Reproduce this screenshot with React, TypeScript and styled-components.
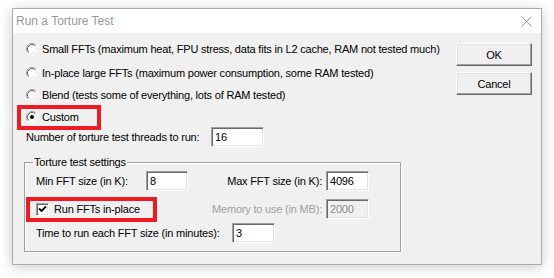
import React from "react";
import styled, { createGlobalStyle } from "styled-components";

const Global = createGlobalStyle`
  html, body { margin: 0; padding: 0; background: #ffffff; }
  body { font-family: "Liberation Sans", Arial, sans-serif; }
`;

const Page = styled.div`
  width: 554px;
  height: 278px;
  padding: 8px 0 0 12px;
  box-sizing: border-box;
`;

const Window = styled.div`
  width: 530px;
  height: 257px;
  box-sizing: border-box;
  border: 1px solid #aaaaaa;
  background: #f0f0f0;
  box-shadow: 0 2px 12px rgba(0, 0, 0, 0.22);
  display: flex;
  flex-direction: column;
`;

const TitleBar = styled.div`
  height: 24px;
  background: #ffffff;
  display: flex;
  align-items: center;
  justify-content: space-between;
  padding: 0 9px 0 3px;
`;

const Title = styled.span`
  font-size: 12px;
  color: #999999;
`;

const Client = styled.div`
  flex: 1;
  display: flex;
  font-size: 11px;
  letter-spacing: -0.2px;
  color: #000;
`;

const LeftCol = styled.div`
  flex: 1;
  display: flex;
  flex-direction: column;
  padding: 6px 0 0 13px;
`;

const RightCol = styled.div`
  width: 76px;
  margin-right: 9px;
  padding-top: 10px;
  display: flex;
  flex-direction: column;
  gap: 6px;
`;

const Button = styled.div`
  height: 23px;
  box-sizing: border-box;
  border: 1px solid;
  border-color: #ffffff #696969 #696969 #ffffff;
  box-shadow: inset -1px -1px 0 #a0a0a0, inset 1px 1px 0 #e3e3e3;
  background: #f0f0f0;
  display: flex;
  align-items: center;
  justify-content: center;
  font-size: 11px;
`;

const Row = styled.div<{ $mt?: number }>`
  position: relative;
  height: 20px;
  display: flex;
  align-items: center;
  margin-top: ${(p) => p.$mt ?? 0}px;
  white-space: nowrap;
`;

const RadioLabel = styled.span`
  margin-left: 4px;
`;

const Label = styled.span<{ $w?: number; $disabled?: boolean; $right?: boolean }>`
  display: inline-block;
  width: ${(p) => (p.$w ? `${p.$w}px` : "auto")};
  color: ${(p) => (p.$disabled ? "#a0a0a0" : "#000")};
  text-align: ${(p) => (p.$right ? "right" : "left")};
  padding-right: ${(p) => (p.$right ? "4px" : "0")};
  box-sizing: border-box;
  white-space: nowrap;
`;

const Input = styled.div<{ $w: number; $disabled?: boolean }>`
  width: ${(p) => p.$w}px;
  height: 20px;
  box-sizing: border-box;
  border: 1px solid;
  border-color: #a0a0a0 #ffffff #ffffff #a0a0a0;
  box-shadow: inset 1px 1px 0 #696969, inset -1px -1px 0 #e3e3e3;
  background: ${(p) => (p.$disabled ? "#f0f0f0" : "#ffffff")};
  color: ${(p) => (p.$disabled ? "#8a8a8a" : "#000")};
  padding: 0 0 0 3px;
  display: flex;
  align-items: center;
  font-size: 11px;
`;

const Highlight = styled.div<{ $l: number; $t: number; $w: number; $h: number }>`
  position: absolute;
  left: ${(p) => p.$l}px;
  top: ${(p) => p.$t}px;
  width: ${(p) => p.$w}px;
  height: ${(p) => p.$h}px;
  box-sizing: border-box;
  border: 4px solid #ed1c24;
  pointer-events: none;
`;

const Group = styled.fieldset`
  margin: 9px 0 0 -2px;
  width: 377px;
  box-sizing: border-box;
  border: 1px solid #a0a0a0;
  box-shadow: 1px 1px 0 #ffffff, inset 1px 1px 0 #ffffff;
  padding: 2px 31px 8px 11px;
  min-inline-size: 0;
`;

const Legend = styled.legend`
  margin-left: -3px;
  padding: 0 1px;
  background: #f0f0f0;
  font-size: 11px;
  line-height: 13px;
`;

const GridRow = styled.div<{ $mt?: number }>`
  position: relative;
  display: grid;
  grid-template-columns: 110px 42px 1fr 43px;
  align-items: center;
  height: 20px;
  margin-top: ${(p) => p.$mt ?? 0}px;
`;

const CheckWrap = styled.div`
  grid-column: 1 / span 2;
  display: flex;
  align-items: center;
  white-space: nowrap;
`;

const CheckBox = styled.span`
  width: 13px;
  height: 13px;
  box-sizing: border-box;
  border: 1px solid;
  border-color: #a0a0a0 #ffffff #ffffff #a0a0a0;
  box-shadow: inset 1px 1px 0 #696969, inset -1px -1px 0 #e3e3e3;
  background: #ffffff;
  display: flex;
  align-items: center;
  justify-content: center;
  margin-right: 5px;
`;

const Radio = ({ checked }: { checked?: boolean }) => (
  <svg width="12" height="12" viewBox="0 0 12 12">
    <circle cx="6" cy="6" r="5.5" fill="#ffffff" />
    <path d="M2.11 9.89 A5.5 5.5 0 0 1 9.89 2.11" stroke="#a0a0a0" fill="none" />
    <path d="M9.89 2.11 A5.5 5.5 0 0 1 2.11 9.89" stroke="#ffffff" fill="none" />
    <path d="M2.82 9.18 A4.5 4.5 0 0 1 9.18 2.82" stroke="#696969" fill="none" />
    <path d="M9.18 2.82 A4.5 4.5 0 0 1 2.82 9.18" stroke="#e3e3e3" fill="none" />
    {checked && <circle cx="6" cy="6" r="2" fill="#000" />}
  </svg>
);

const CheckMark = () => (
  <svg width="9" height="9" viewBox="0 0 9 9">
    <path d="M1 3.5 L3.5 6 L8 1.5" stroke="#000" strokeWidth="1.8" fill="none" />
  </svg>
);

const CloseIcon = () => (
  <svg width="11" height="11" viewBox="0 0 11 11">
    <path d="M0.5 0.5 L10.5 10.5 M10.5 0.5 L0.5 10.5" stroke="#999" strokeWidth="1" />
  </svg>
);

export default function App() {
  return (
    <>
      <Global />
      <Page>
        <Window>
          <TitleBar>
            <Title>Run a Torture Test</Title>
            <CloseIcon />
          </TitleBar>
          <Client>
            <LeftCol>
              <Row $mt={0}>
                <Radio />
                <RadioLabel>
                  Small FFTs (maximum heat, FPU stress, data fits in L2 cache, RAM not tested much)
                </RadioLabel>
              </Row>
              <Row $mt={4}>
                <Radio />
                <RadioLabel>
                  In-place large FFTs (maximum power consumption, some RAM tested)
                </RadioLabel>
              </Row>
              <Row $mt={2}>
                <Radio />
                <RadioLabel>Blend (tests some of everything, lots of RAM tested)</RadioLabel>
              </Row>
              <Row $mt={2}>
                <Radio checked />
                <RadioLabel>Custom</RadioLabel>
                <Highlight $l={-9} $t={-2} $w={84} $h={25} />
              </Row>
              <Row>
                <Label $w={185}>Number of torture test threads to run:</Label>
                <Input $w={53}>16</Input>
              </Row>
              <Group>
                <Legend>Torture test settings</Legend>
                <GridRow>
                  <Label>Min FFT size (in K):</Label>
                  <Input $w={42}>8</Input>
                  <Label $right>Max FFT size (in K):</Label>
                  <Input $w={43}>4096</Input>
                </GridRow>
                <GridRow $mt={8}>
                  <CheckWrap>
                    <CheckBox>
                      <CheckMark />
                    </CheckBox>
                    <span>Run FFTs in-place</span>
                  </CheckWrap>
                  <Label $right $disabled>
                    Memory to use (in MB):
                  </Label>
                  <Input $w={43} $disabled>
                    2000
                  </Input>
                  <Highlight $l={-10} $t={-2} $w={131} $h={25} />
                </GridRow>
                <Row $mt={4}>
                  <Label $w={196}>Time to run each FFT size (in minutes):</Label>
                  <Input $w={43}>3</Input>
                </Row>
              </Group>
            </LeftCol>
            <RightCol>
              <Button>OK</Button>
              <Button>Cancel</Button>
            </RightCol>
          </Client>
        </Window>
      </Page>
    </>
  );
}
